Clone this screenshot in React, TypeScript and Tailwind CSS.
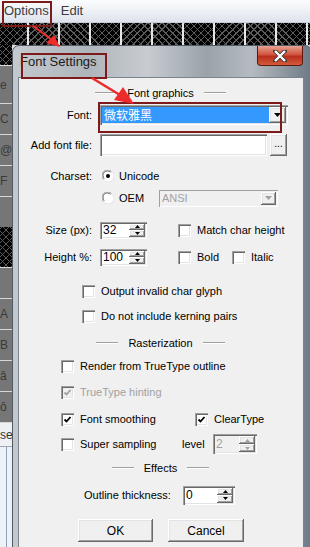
import type { ReactNode } from "react";

// Windows 7 style "Font Settings" dialog over a menu bar, with red callouts

const sunken =
  "bg-white shadow-[inset_1px_1px_0_#a0a0a0,inset_2px_2px_0_#696969,inset_-1px_-1px_0_#ffffff,inset_-2px_-2px_0_#e3e3e3]";
const raised =
  "bg-[#f0f0f0] shadow-[inset_-1px_-1px_0_#696969,inset_1px_1px_0_#ffffff,inset_-2px_-2px_0_#a0a0a0,inset_2px_2px_0_#e3e3e3]";
const hatch =
  "bg-black bg-[image:repeating-linear-gradient(45deg,#5c5c5c_0_1px,transparent_1px_5px),repeating-linear-gradient(-45deg,#5c5c5c_0_1px,transparent_1px_5px)]";

function Check({ checked = false, disabled = false }: { checked?: boolean; disabled?: boolean }) {
  return (
    <div className={`w-[13px] h-[13px] shrink-0 flex items-center justify-center ${disabled ? "bg-[#f0f0f0]" : "bg-white"} shadow-[inset_1px_1px_0_#a0a0a0,inset_2px_2px_0_#696969,inset_-1px_-1px_0_#ffffff,inset_-2px_-2px_0_#e3e3e3]`}>
      {checked && (
        <svg width="9" height="9" viewBox="0 0 9 9">
          <polyline points="1.5,4.5 3.5,6.5 7.5,2" fill="none" stroke={disabled ? "#a0a0a0" : "#000"} strokeWidth="1.8" />
        </svg>
      )}
    </div>
  );
}

function Radio({ checked = false }: { checked?: boolean }) {
  return (
    <svg width="12" height="12" viewBox="0 0 12 12" className="shrink-0">
      <circle cx="6" cy="6" r="5.5" fill="#fff" />
      <path d="M1.5 9.5 A5.5 5.5 0 0 1 9.5 1.5" fill="none" stroke="#a0a0a0" strokeWidth="1" />
      <path d="M2.3 8.7 A4.5 4.5 0 0 1 8.7 2.3" fill="none" stroke="#696969" strokeWidth="1" />
      <path d="M10.5 2.5 A5.5 5.5 0 0 1 2.5 10.5" fill="none" stroke="#e3e3e3" strokeWidth="1" />
      {checked && <circle cx="6" cy="6" r="2" fill="#000" />}
    </svg>
  );
}

function Tri({ up = false, color = "#000" }: { up?: boolean; color?: string }) {
  return (
    <svg width="5" height="3" viewBox="0 0 5 3">
      <polygon points={up ? "2.5,0 5,3 0,3" : "0,0 5,0 2.5,3"} fill={color} />
    </svg>
  );
}

function Spin({ value, w, h = 17, disabled = false }: { value: string; w: string; h?: number; disabled?: boolean }) {
  return (
    <div className={`${w} flex items-stretch p-[2px] ${disabled ? "bg-[#f0f0f0]" : "bg-white"} shadow-[inset_1px_1px_0_#a0a0a0,inset_2px_2px_0_#696969,inset_-1px_-1px_0_#ffffff,inset_-2px_-2px_0_#e3e3e3]`} style={{ height: h }}>
      <div className={`flex-1 pl-[1px] leading-none flex items-center text-[12px] ${disabled ? "text-[#a0a0a0]" : "text-black"}`}>{value}</div>
      <div className="w-[16px] flex flex-col">
        <div className={`${raised} flex-1 flex items-center justify-center`}>
          <Tri up color={disabled ? "#a0a0a0" : "#000"} />
        </div>
        <div className={`${raised} flex-1 flex items-center justify-center`}>
          <Tri color={disabled ? "#a0a0a0" : "#000"} />
        </div>
      </div>
    </div>
  );
}

function Sep({ label }: { label: string }) {
  return (
    <div className="h-[14px] flex items-center justify-center gap-[10px]">
      <div className="w-[22px] h-[2px] border-t border-[#a0a0a0] border-b border-b-white" />
      <span>{label}</span>
      <div className="w-[22px] h-[2px] border-t border-[#a0a0a0] border-b border-b-white" />
    </div>
  );
}

function Row({ className = "", children }: { className?: string; children: ReactNode }) {
  return <div className={`flex items-center ${className}`}>{children}</div>;
}

function Label({ children }: { children: ReactNode }) {
  return <div className="w-[74px] text-right">{children}</div>;
}

// strip of the window behind the dialog, peeking out at the left edge
function Peek({ h, letter, dark = true }: { h: string; letter?: string; dark?: boolean }) {
  return (
    <div className={`${h} border-t border-[#d8d8d8] ${dark ? "bg-[#767676] text-[#3a3a3a]" : "bg-[#eef0f3] text-[#333]"} text-[12px] leading-none flex items-center overflow-hidden`}>
      {letter}
    </div>
  );
}

export default function App() {
  const cells = Array.from({ length: 10 });
  return (
    <div className="relative w-[310px] h-[547px] overflow-hidden bg-[#d9dde3] font-['Liberation_Sans',Arial,sans-serif] text-[11px] text-black">
      {/* menu bar */}
      <div className="h-[23px] flex items-center gap-[12px] pl-[4px] bg-[linear-gradient(#fbfcfd,#f1f3f7_40%,#dde2ec)] border-b border-[#c7ccd6] text-[13px] text-[#3c3c3c]">
        <span>Options</span>
        <span>Edit</span>
      </div>
      {/* tiled strip */}
      <div className={`h-[22px] flex ${hatch}`}>
        <div className="w-[27px] shrink-0" />
        {cells.map((_, i) => (
          <div key={i} className="w-[31px] shrink-0 border-l-2 border-[#e6e6e6]" />
        ))}
      </div>
      {/* background window remnants on the left */}
      <div className="absolute left-0 top-[45px] w-[12px] h-[502px] flex flex-col bg-[#767676]">
        <div className={`h-[20px] ${hatch}`} />
        <Peek h="h-[38px]" letter="e" />
        <Peek h="h-[31px]" letter="C" />
        <Peek h="h-[31px]" letter="@" />
        <Peek h="h-[31px]" letter="F" />
        <Peek h="h-[31px]" />
        <div className={`h-[40px] ${hatch}`} />
        <Peek h="h-[31px]" />
        <Peek h="h-[31px]" letter="A" />
        <Peek h="h-[31px]" letter="B" />
        <Peek h="h-[31px]" letter="â" />
        <Peek h="h-[31px]" letter="ô" />
        <Peek h="h-[24px]" letter="se" dark={false} />
        <div className="flex-1 bg-[#eef1f5] border-t border-[#9aa8b8] flex">
          <div className="w-[6px]" />
          <div className="w-[1px] bg-[#8aa0bc]" />
        </div>
      </div>

      {/* dialog window */}
      <div className="absolute left-[12px] top-[45px] w-[300px] h-[520px] rounded-t-[7px] border border-[#4f5a64] bg-[linear-gradient(90deg,#c4c9ce,#aeb5bb_25%,#c8ccd1_45%,#9aa2aa_65%,#b5bbc1_80%,#6f7a86)]">
        <div className="h-[31px] flex justify-between">
          <div className="pl-[7px] pt-[6px] text-[13px] text-[#1a1a1a]">Font Settings</div>
          <div className="w-[46px] h-[20px] mr-[8px] rounded-b-[4px] border border-t-0 border-[#5a1a12] bg-[linear-gradient(#e8a393,#d0533d_45%,#b8301c_55%,#d45a3a)] flex items-center justify-center">
            <svg width="14" height="12" viewBox="0 0 14 12">
              <path d="M2 1 L12 11 M12 1 L2 11" stroke="#3a3a3a" strokeWidth="4" strokeLinecap="square" />
              <path d="M2 1 L12 11 M12 1 L2 11" stroke="#ffffff" strokeWidth="2.4" />
            </svg>
          </div>
        </div>
        {/* client area */}
        <div className="ml-[5px] w-[285px] h-[480px] bg-[#f0f0f0] shadow-[inset_1px_1px_0_#7a848d]">
          <div className="h-[9px]" />
          <Sep label="Font graphics" />
          <Row className="h-[30px]">
            <Label>Font:</Label>
            <div className={`ml-[8px] w-[188px] h-[20px] p-[2px] flex ${sunken}`}>
              <div className="flex-1 bg-[#3399ff] text-white text-[12px] leading-none flex items-center pl-[2px] font-['Noto_Sans_CJK_SC',sans-serif]">微软雅黑</div>
              <div className={`w-[17px] ${raised} flex items-center justify-center`}>
                <svg width="7" height="4" viewBox="0 0 7 4"><polygon points="0,0 7,0 3.5,4" fill="#000" /></svg>
              </div>
            </div>
          </Row>
          <Row className="h-[30px]">
            <Label>Add font file:</Label>
            <div className={`ml-[8px] w-[167px] h-[22px] ${sunken}`} />
            <div className={`ml-[3px] w-[17px] h-[22px] ${raised} flex items-center justify-center text-[10px] pb-[3px]`}>...</div>
          </Row>
          <Row className="h-[22px] mt-[5px]">
            <Label>Charset:</Label>
            <div className="ml-[10px]"><Radio checked /></div>
            <span className="ml-[5px]">Unicode</span>
          </Row>
          <Row className="h-[22px]">
            <div className="w-[84px]" />
            <Radio />
            <span className="ml-[5px] w-[40px]">OEM</span>
            <div className="w-[119px] h-[17px] p-[2px] flex bg-[#f0f0f0] shadow-[inset_1px_1px_0_#a0a0a0,inset_-1px_-1px_0_#ffffff]">
              <div className="flex-1 text-[#a0a0a0] leading-none flex items-center pl-[1px]">ANSI</div>
              <div className={`w-[15px] ${raised} flex items-center justify-center`}>
                <svg width="7" height="4" viewBox="0 0 7 4"><polygon points="0,0 7,0 3.5,4" fill="#a0a0a0" /></svg>
              </div>
            </div>
          </Row>
          <Row className="h-[20px] mt-[11px]">
            <Label>Size (px):</Label>
            <div className="ml-[8px]"><Spin value="32" w="w-[47px]" /></div>
            <div className="ml-[31px]"><Check /></div>
            <span className="ml-[6px]">Match char height</span>
          </Row>
          <Row className="h-[20px] mt-[7px]">
            <Label>Height %:</Label>
            <div className="ml-[8px]"><Spin value="100" w="w-[47px]" /></div>
            <div className="ml-[31px]"><Check /></div>
            <span className="ml-[6px] w-[35px]">Bold</span>
            <Check />
            <span className="ml-[6px]">Italic</span>
          </Row>
          <Row className="h-[20px] mt-[14px] pl-[64px]">
            <Check />
            <span className="ml-[6px]">Output invalid char glyph</span>
          </Row>
          <Row className="h-[20px] mt-[5px] pl-[64px]">
            <Check />
            <span className="ml-[6px]">Do not include kerning pairs</span>
          </Row>
          <div className="mt-[10px]"><Sep label="Rasterization" /></div>
          <Row className="h-[20px] mt-[6px] pl-[43px]">
            <Check />
            <span className="ml-[6px]">Render from TrueType outline</span>
          </Row>
          <Row className="h-[20px] mt-[6px] pl-[43px]">
            <Check checked disabled />
            <span className="ml-[6px] text-[#a0a0a0]">TrueType hinting</span>
          </Row>
          <Row className="h-[20px] mt-[7px] pl-[43px]">
            <Check checked />
            <span className="ml-[6px] w-[115px]">Font smoothing</span>
            <Check checked />
            <span className="ml-[6px]">ClearType</span>
          </Row>
          <Row className="h-[20px] mt-[5px] pl-[43px]">
            <Check />
            <span className="ml-[6px] w-[102px]">Super sampling</span>
            <span className="w-[31px]">level</span>
            <Spin value="2" w="w-[44px]" h={20} disabled />
          </Row>
          <div className="mt-[7px]"><Sep label="Effects" /></div>
          <Row className="h-[20px] mt-[10px] pl-[66px]">
            <span className="w-[99px]">Outline thickness:</span>
            <Spin value="0" w="w-[52px]" h={19} />
          </Row>
          <Row className="h-[23px] mt-[14px] pl-[60px] gap-[15px] text-[12px]">
            <div className={`w-[75px] h-[23px] ${raised} flex items-center justify-center`}>OK</div>
            <div className={`w-[76px] h-[23px] ${raised} flex items-center justify-center`}>Cancel</div>
          </Row>
        </div>
      </div>

      {/* red callouts */}
      <div className="absolute left-[2px] top-[1px] w-[50px] h-[26px] border-2 border-[#7d1a1a]" />
      <div className="absolute left-[21px] top-[53px] w-[86px] h-[26px] border-2 border-[#7d1a1a]" />
      <div className="absolute left-[98px] top-[102px] w-[184px] h-[31px] border-2 border-[#7d1a1a]" />
      <svg className="absolute left-0 top-0" width="310" height="547" viewBox="0 0 310 547">
        <line x1="33" y1="26" x2="52" y2="40" stroke="#ee2b2b" strokeWidth="2" />
        <polygon points="60,47 46,43 54,35" fill="#ee2b2b" />
        <line x1="92" y1="78" x2="120" y2="95" stroke="#ee2b2b" strokeWidth="2.5" />
        <polygon points="134,104 114,100 123,87" fill="#ee2b2b" />
      </svg>
    </div>
  );
}
